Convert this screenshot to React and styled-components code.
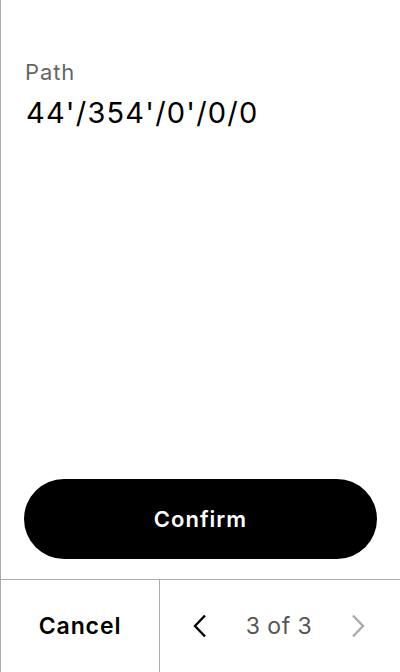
import styled, { createGlobalStyle } from "styled-components";

const Global = createGlobalStyle`
  html, body {
    margin: 0;
    padding: 0;
    background: #fff;
  }
  body {
    font-family: Inter, "Noto Sans", sans-serif;
    -webkit-font-smoothing: antialiased;
  }
`

const Screen = styled.div`
  width: 400px;
  height: 672px;
  box-sizing: border-box;
  border-left: 1px solid #ababab;
  display: flex;
  flex-direction: column;
  background: #fff;
`

const Body = styled.div`
  flex: 1;
  display: flex;
  flex-direction: column;
  padding: 58px 23px 20px 23px;
`

const Label = styled.div`
  padding-left: 1px;
  font-size: 22px;
  line-height: 28px;
  letter-spacing: 0.9px;
  color: #666;
`

const Value = styled.div`
  margin-top: 9px;
  padding-left: 2px;
  font-size: 29px;
  line-height: 36px;
  color: #000;
  letter-spacing: 1.2px;
`

const Spacer = styled.div`
  flex: 1;
`

const ConfirmButton = styled.button`
  height: 80px;
  width: 100%;
  border: none;
  border-radius: 40px;
  background: #000;
  color: #fff;
  font-family: inherit;
  font-size: 22px;
  font-weight: 600;
  letter-spacing: 1px;
  cursor: pointer;
`

const Footer = styled.div`
  height: 92px;
  border-top: 1px solid #ababab;
  display: flex;
`

const CancelCell = styled.button`
  width: 159px;
  border: none;
  border-right: 1px solid #ababab;
  background: none;
  font-family: inherit;
  font-size: 23px;
  font-weight: 600;
  letter-spacing: 0.9px;
  color: #000;
  padding: 0;
`

const Pager = styled.div`
  flex: 1;
  display: flex;
  align-items: center;
  justify-content: space-between;
  padding: 0 30px 0 28px;
`

const PageText = styled.span`
  font-size: 23px;
  letter-spacing: 0.5px;
  color: #555;
`

const Arrow = styled.button`
  border: none;
  background: none;
  padding: 0;
  width: 24px;
  height: 24px;
  display: flex;
  align-items: center;
  justify-content: center;
  color: ${(p) => (p.$disabled ? "#ababab" : "#000")};
`

const Chevron = ({ dir }) => (
  <svg width="16" height="24" viewBox="0 0 16 24" fill="none">
    <path
      d={dir === "left" ? "M13 1.5 L3 12 L13 22.5" : "M3 1.5 L13 12 L3 22.5"}
      stroke="currentColor"
      strokeWidth="2.4"
      strokeLinecap="butt"
      strokeLinejoin="miter"
    />
  </svg>
)

const App = () => {
  return (
    <>
      <Global />
      <Screen>
        <Body>
          <Label>Path</Label>
          <Value>44'/354'/0'/0/0</Value>
          <Spacer />
          <ConfirmButton>Confirm</ConfirmButton>
        </Body>
        <Footer>
          <CancelCell>Cancel</CancelCell>
          <Pager>
            <Arrow>
              <Chevron dir="left" />
            </Arrow>
            <PageText>3 of 3</PageText>
            <Arrow $disabled>
              <Chevron dir="right" />
            </Arrow>
          </Pager>
        </Footer>
      </Screen>
    </>
  )
}

export default App
